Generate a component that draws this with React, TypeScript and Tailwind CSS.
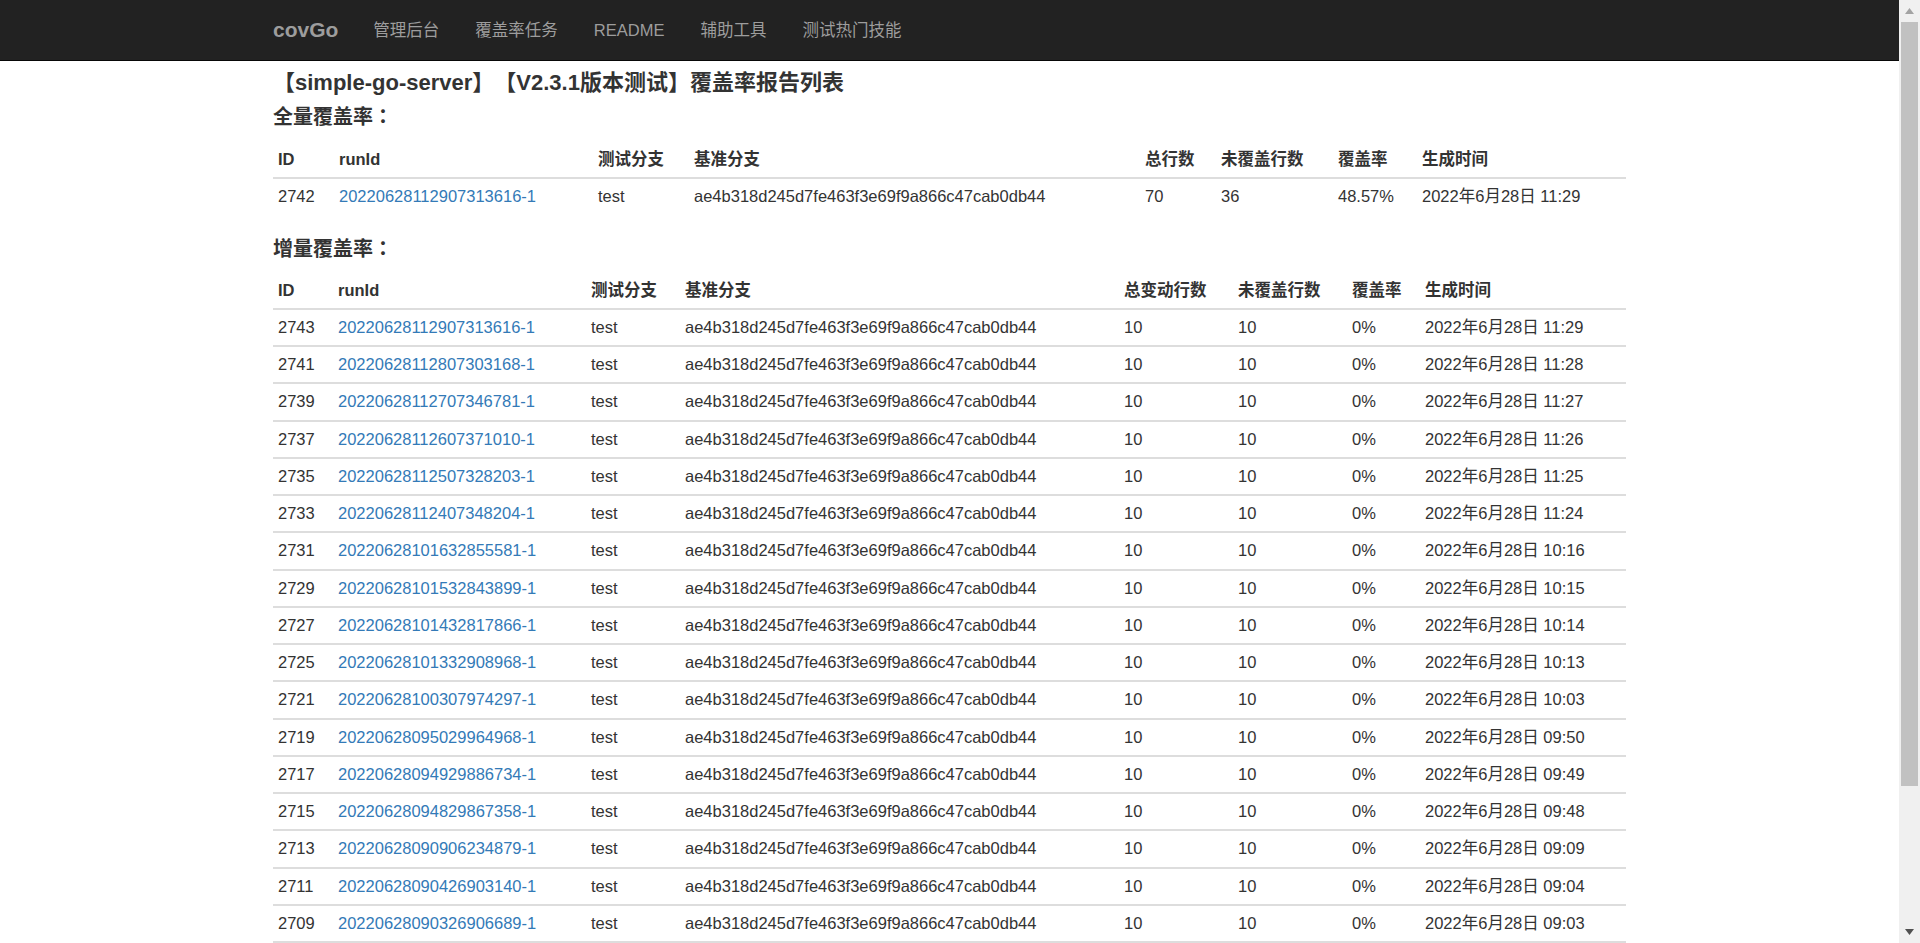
import React from "react";

const FONT = '"Liberation Sans", Arial, "Noto Sans CJK SC", sans-serif';
const JP = '"Liberation Sans", Arial, "Noto Sans CJK JP", sans-serif';
const HASH = "ae4b318d245d7fe463f3e69f9a866c47cab0db44";

const fullCols = [61, 259, 96, 451, 76, 117, 84, 209];
const incCols = [60, 253, 94, 439, 114, 114, 73, 206];

const incRows: [string, string, string][] = [
  ["2743", "20220628112907313616-1", "11:29"],
  ["2741", "20220628112807303168-1", "11:28"],
  ["2739", "20220628112707346781-1", "11:27"],
  ["2737", "20220628112607371010-1", "11:26"],
  ["2735", "20220628112507328203-1", "11:25"],
  ["2733", "20220628112407348204-1", "11:24"],
  ["2731", "20220628101632855581-1", "10:16"],
  ["2729", "20220628101532843899-1", "10:15"],
  ["2727", "20220628101432817866-1", "10:14"],
  ["2725", "20220628101332908968-1", "10:13"],
  ["2721", "20220628100307974297-1", "10:03"],
  ["2719", "20220628095029964968-1", "09:50"],
  ["2717", "20220628094929886734-1", "09:49"],
  ["2715", "20220628094829867358-1", "09:48"],
  ["2713", "20220628090906234879-1", "09:09"],
  ["2711", "20220628090426903140-1", "09:04"],
  ["2709", "20220628090326906689-1", "09:03"],
  ["2707", "20220628090226911372-1", "09:02"],
  ["2705", "20220628090126905518-1", "09:01"],
];

function Th({ children }: { children: React.ReactNode }) {
  return (
    <th className="text-left font-bold px-[5px] py-2 leading-[19.25px] border-b-2 border-[#dddddd] whitespace-nowrap">
      {children}
    </th>
  );
}

function Td({ children, first }: { children: React.ReactNode; first: boolean }) {
  return (
    <td
      className={
        first
          ? "px-[5px] py-2 leading-[19.25px] whitespace-nowrap"
          : "px-[5px] py-2 leading-[19.25px] whitespace-nowrap border-t-2 border-[#dddddd]"
      }
    >
      {children}
    </td>
  );
}

function Link({ children }: { children: React.ReactNode }) {
  return <a className="text-[#337ab7] no-underline cursor-pointer">{children}</a>;
}

function ColGroup({ widths }: { widths: number[] }) {
  return (
    <colgroup>
      {widths.map((w, i) => (
        <col key={i} style={{ width: w }} />
      ))}
    </colgroup>
  );
}

function Colon() {
  return <span style={{ fontFamily: JP }}>：</span>;
}

export default function App() {
  return (
    <div
      className="flex w-[1920px] h-[943px] overflow-hidden bg-white text-[#333333] [text-spacing-trim:space-all]"
      style={{ fontFamily: FONT }}
    >
      <div className="flex-1 flex flex-col min-w-0">
        <div className="h-[1px] bg-[#eeeeee]" />
        <nav className="h-[61px] bg-[#222222] border-b border-[#080808] shrink-0">
          <div className="w-[1353px] mx-auto h-full flex items-center">
            <span className="text-[21px] font-bold text-[#9d9d9d] mr-[35px]">covGo</span>
            <div className="flex items-center gap-[36px] text-[16.5px] text-[#9d9d9d]">
              <span>管理后台</span>
              <span>覆盖率任务</span>
              <span>README</span>
              <span>辅助工具</span>
              <span>测试热门技能</span>
            </div>
          </div>
        </nav>
        <main className="w-[1353px] mx-auto">
          <h3 className="mt-[8px] text-[22px] leading-[28px] font-bold">
            【simple-go-server】【V2.3.1版本测试】覆盖率报告列表
          </h3>
          <h4 className="mt-[6px] text-[20px] leading-[28px] font-bold">
            全量覆盖率<Colon />
          </h4>
          <table className="mt-[11px] w-full table-fixed border-separate border-spacing-0 text-[16.5px]">
            <ColGroup widths={fullCols} />
            <thead>
              <tr>
                <Th>ID</Th>
                <Th>runId</Th>
                <Th>测试分支</Th>
                <Th>基准分支</Th>
                <Th>总行数</Th>
                <Th>未覆盖行数</Th>
                <Th>覆盖率</Th>
                <Th>生成时间</Th>
              </tr>
            </thead>
            <tbody>
              <tr>
                <Td first>2742</Td>
                <Td first>
                  <Link>20220628112907313616-1</Link>
                </Td>
                <Td first>test</Td>
                <Td first>{HASH}</Td>
                <Td first>70</Td>
                <Td first>36</Td>
                <Td first>48.57%</Td>
                <Td first>2022年6月28日 11:29</Td>
              </tr>
            </tbody>
          </table>
          <h4 className="mt-[20px] text-[20px] leading-[28px] font-bold">
            增量覆盖率<Colon />
          </h4>
          <table className="mt-[10px] w-full table-fixed border-separate border-spacing-0 text-[16.5px]">
            <ColGroup widths={incCols} />
            <thead>
              <tr>
                <Th>ID</Th>
                <Th>runId</Th>
                <Th>测试分支</Th>
                <Th>基准分支</Th>
                <Th>总变动行数</Th>
                <Th>未覆盖行数</Th>
                <Th>覆盖率</Th>
                <Th>生成时间</Th>
              </tr>
            </thead>
            <tbody>
              {incRows.map(([id, run, time], i) => (
                <tr key={id}>
                  <Td first={i === 0}>{id}</Td>
                  <Td first={i === 0}>
                    <Link>{run}</Link>
                  </Td>
                  <Td first={i === 0}>test</Td>
                  <Td first={i === 0}>{HASH}</Td>
                  <Td first={i === 0}>10</Td>
                  <Td first={i === 0}>10</Td>
                  <Td first={i === 0}>0%</Td>
                  <Td first={i === 0}>2022年6月28日 {time}</Td>
                </tr>
              ))}
            </tbody>
          </table>
        </main>
      </div>
      <div className="w-[21px] shrink-0 bg-[#f0f0f0] flex flex-col items-center">
        <svg className="mt-[8px] shrink-0" width="9" height="6" viewBox="0 0 9 6">
          <polygon points="4.5,0 9,6 0,6" fill="#a3a3a3" />
        </svg>
        <div className="mt-[8px] w-[17px] h-[764px] bg-[#c1c1c1] shrink-0" />
        <div className="flex-1" />
        <svg className="mb-[8px] shrink-0" width="9" height="6" viewBox="0 0 9 6">
          <polygon points="0,0 9,0 4.5,6" fill="#505050" />
        </svg>
      </div>
    </div>
  );
}
